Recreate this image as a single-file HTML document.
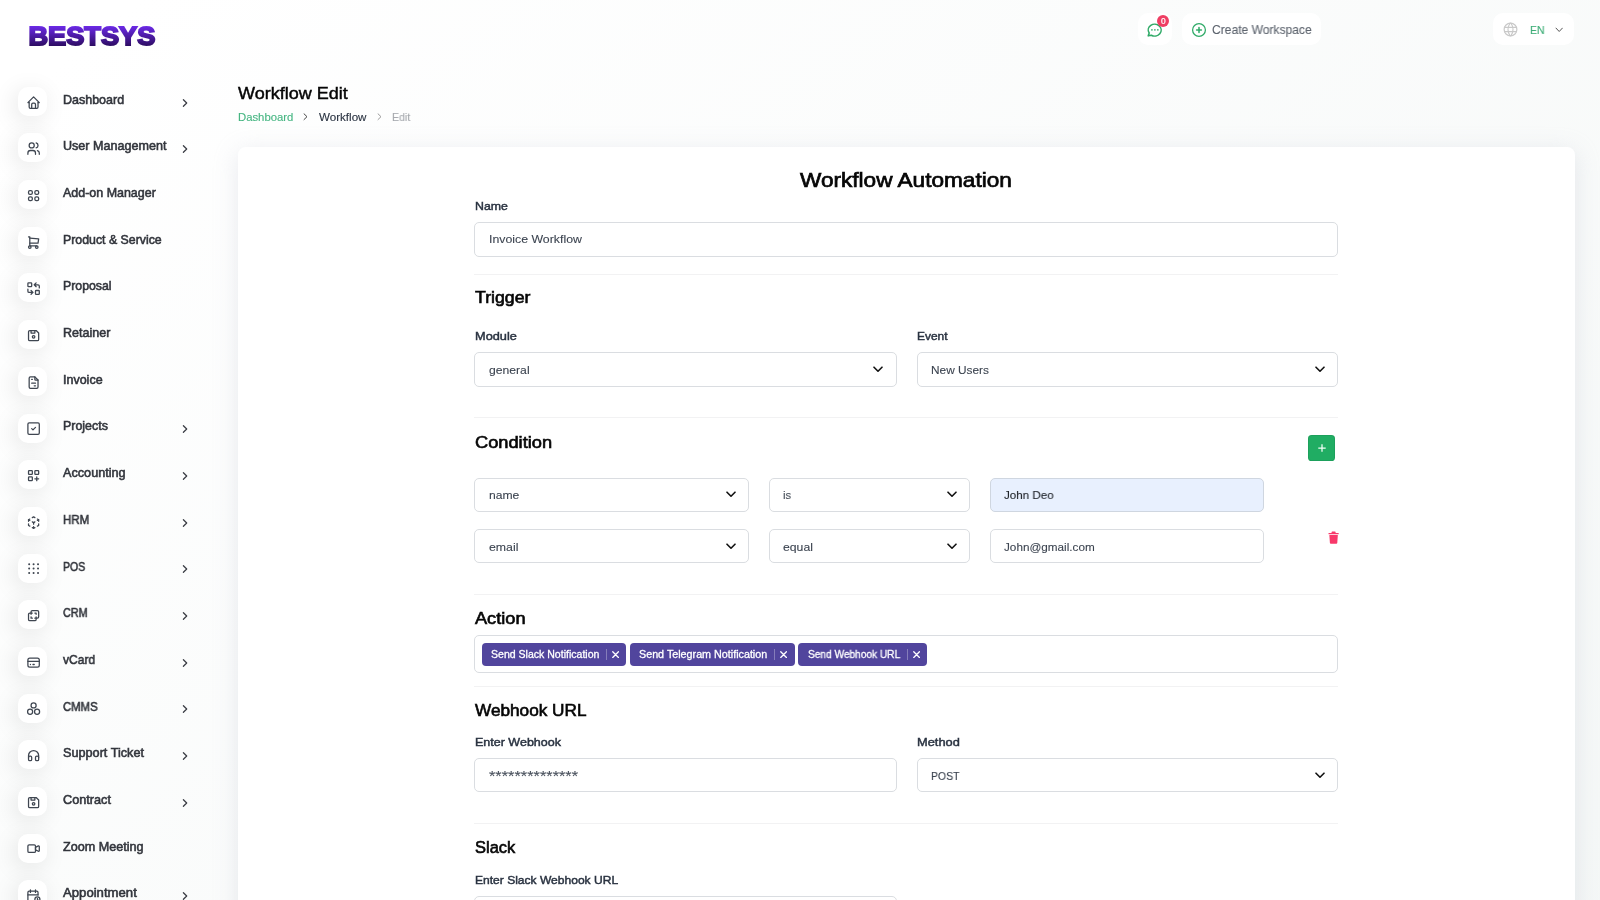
<!DOCTYPE html>
<html lang="en">
<head>
<meta charset="utf-8">
<title>Workflow Edit</title>
<style>
*{box-sizing:border-box;margin:0;padding:0}
html,body{width:1600px;height:900px;overflow:hidden}
body{font-family:"Liberation Sans",sans-serif;color:#293240;background:#fff;position:relative}
.bg{position:absolute;left:0;top:0;width:1600px;height:1800px;background:linear-gradient(141.55deg,rgba(240,244,243,0) 3.46%,#f0f4f3 99.86%),#ffffff}
.abs{position:absolute}
.t{position:absolute;white-space:nowrap;display:block;will-change:transform}
.sb{-webkit-text-stroke:0.45px currentColor}
/* sidebar */
.ib{position:absolute;left:18.3px;width:29px;height:29px;border-radius:10px;background:#fff;box-shadow:-3px 4px 23px rgba(0,0,0,0.1)}
.ib svg{position:absolute;left:7.3px;top:7.8px;width:15.2px;height:15.2px;stroke:#3f4651;fill:none;stroke-width:2;stroke-linecap:round;stroke-linejoin:round}
.mt{font-size:12.1px;line-height:14px;color:#32353c;-webkit-text-stroke:0.55px #32353c}
.ar{position:absolute;left:181px;width:8px;height:10px;stroke:#3a3d44;fill:none;stroke-width:1.25;stroke-linecap:round;stroke-linejoin:round}
/* header */
.hb{position:absolute;top:12.8px;height:32.7px;background:#fff;border-radius:10px}
/* main */
.card{position:absolute;left:238px;top:147px;width:1337px;height:800px;background:#fff;border-radius:8px;box-shadow:0 5px 24px rgba(182,186,203,0.3)}
.lbl{font-size:11.4px;line-height:14px;color:#293240;-webkit-text-stroke:0.45px #293240}
.h4{font-size:15.9px;line-height:20px;color:#060606;-webkit-text-stroke:0.6px #060606}
.box{position:absolute;border:1px solid #dadde1;border-radius:5px;background:#fff}
.it{font-size:11.7px;line-height:14px;color:#3c4450;-webkit-text-stroke:0.1px #3c4450}
.cv{position:absolute;width:10px;height:7px;stroke:#111;fill:none;stroke-width:1.6;stroke-linecap:round;stroke-linejoin:round}
.hr{position:absolute;left:474px;width:864px;height:1px;background:#f2f2f3}
.tag{position:absolute;top:642.5px;height:23.3px;border-radius:4px;background:#51459d}
.tt{font-size:10.5px;line-height:13px;color:#fff;-webkit-text-stroke:0.3px #fff}
.tag i{position:absolute;top:6px;width:1px;height:11.5px;background:rgba(255,255,255,0.3)}
.tag svg{position:absolute;top:8.1px;width:7.2px;height:7.2px;stroke:#fff;stroke-width:1.2;fill:none;stroke-linecap:round}
</style>
</head>
<body>
<div class="bg"></div>
<svg class="abs" style="left:26px;top:22px;will-change:transform" width="134" height="30" viewBox="0 0 134 30"><defs><linearGradient id="lg" gradientUnits="userSpaceOnUse" x1="0" y1="3" x2="0" y2="25"><stop offset="0" stop-color="#6f2bee"/><stop offset="1" stop-color="#2a0b5c"/></linearGradient></defs><text x="2.4" y="23.3" font-family="Liberation Sans, sans-serif" font-weight="bold" font-size="26.6" textLength="127" lengthAdjust="spacingAndGlyphs" fill="url(#lg)" stroke="url(#lg)" stroke-width="1.9" stroke-linejoin="miter">BESTSYS</text></svg>
<span class="ib" style="top:86.8px"><svg viewBox="0 0 24 24"><path d="M5 12l-2 0l9 -9l9 9l-2 0"/><path d="M5 12v7a2 2 0 0 0 2 2h10a2 2 0 0 0 2 -2v-7"/><path d="M9 21v-6a2 2 0 0 1 2 -2h2a2 2 0 0 1 2 2v6"/></svg></span>
<span class="t mt" id="t1" style="left:63.4px;top:92.56px;font-size:12.1px;line-height:14px;transform:scaleX(1.0326);transform-origin:0 0;">Dashboard</span>
<svg class="ar" style="top:97.5px" viewBox="0 0 8 10"><path d="M2.4 1.7l3.300 3.300l-3.300 3.300"/></svg>
<span class="ib" style="top:133.4px"><svg viewBox="0 0 24 24"><path d="M9 7m-4 0a4 4 0 1 0 8 0a4 4 0 1 0 -8 0"/><path d="M3 21v-2a4 4 0 0 1 4 -4h4a4 4 0 0 1 4 4v2"/><path d="M16 3.13a4 4 0 0 1 0 7.75"/><path d="M21 21v-2a4 4 0 0 0 -3 -3.85"/></svg></span>
<span class="t mt" id="t2" style="left:63.4px;top:139.26px;font-size:12.1px;line-height:14px;transform:scaleX(1.0394);transform-origin:0 0;">User Management</span>
<svg class="ar" style="top:144.2px" viewBox="0 0 8 10"><path d="M2.4 1.7l3.300 3.300l-3.300 3.300"/></svg>
<span class="ib" style="top:180.1px"><svg viewBox="0 0 24 24"><rect x="4" y="4" width="6" height="6" rx="2.2"/><rect x="14" y="4" width="6" height="6" rx="2.2"/><rect x="4" y="14" width="6" height="6" rx="2.2"/><rect x="14" y="14" width="6" height="6" rx="2.2"/></svg></span>
<span class="t mt" id="t3" style="left:63.4px;top:185.96px;font-size:12.1px;line-height:14px;transform:scaleX(1.0300);transform-origin:0 0;">Add-on Manager</span>
<span class="ib" style="top:226.8px"><svg viewBox="0 0 24 24"><path d="M6 19m-2 0a2 2 0 1 0 4 0a2 2 0 1 0 -4 0"/><path d="M17 19m-2 0a2 2 0 1 0 4 0a2 2 0 1 0 -4 0"/><path d="M17 17h-11v-14h-2"/><path d="M6 5l14 1l-1 7h-13"/></svg></span>
<span class="t mt" id="t4" style="left:63.4px;top:232.66px;font-size:12.1px;line-height:14px;transform:scaleX(1.0197);transform-origin:0 0;">Product &amp; Service</span>
<span class="ib" style="top:273.4px"><svg viewBox="0 0 24 24"><rect x="3" y="3" width="6" height="6" rx="1"/><rect x="15" y="15" width="6" height="6" rx="1"/><path d="M21 11v-3a2 2 0 0 0 -2 -2h-6l3 3m0 -6l-3 3"/><path d="M3 13v3a2 2 0 0 0 2 2h6l-3 -3m0 6l3 -3"/></svg></span>
<span class="t mt" id="t5" style="left:63.4px;top:279.36px;font-size:12.1px;line-height:14px;transform:scaleX(1.0181);transform-origin:0 0;">Proposal</span>
<span class="ib" style="top:320.1px"><svg viewBox="0 0 24 24"><path d="M6 4h10l4 4v10a2 2 0 0 1 -2 2h-12a2 2 0 0 1 -2 -2v-12a2 2 0 0 1 2 -2"/><path d="M12 14m-2 0a2 2 0 1 0 4 0a2 2 0 1 0 -4 0"/><path d="M14 4l0 4l-6 0l0 -4"/></svg></span>
<span class="t mt" id="t6" style="left:63.4px;top:326.06px;font-size:12.1px;line-height:14px;transform:scaleX(1.0368);transform-origin:0 0;">Retainer</span>
<span class="ib" style="top:366.8px"><svg viewBox="0 0 24 24"><path d="M14 3v4a1 1 0 0 0 1 1h4"/><path d="M17 21h-10a2 2 0 0 1 -2 -2v-14a2 2 0 0 1 2 -2h7l5 5v11a2 2 0 0 1 -2 2z"/><path d="M9 7l1 0"/><path d="M9 13l6 0"/><path d="M13 17l2 0"/></svg></span>
<span class="t mt" id="t7" style="left:63.4px;top:372.76px;font-size:12.1px;line-height:14px;transform:scaleX(1.0332);transform-origin:0 0;">Invoice</span>
<span class="ib" style="top:413.5px"><svg viewBox="0 0 24 24"><rect x="3" y="3" width="18" height="18" rx="2"/><path d="M9 12l2 2l4 -4"/></svg></span>
<span class="t mt" id="t8" style="left:63.4px;top:419.46px;font-size:12.1px;line-height:14px;transform:scaleX(1.0278);transform-origin:0 0;">Projects</span>
<svg class="ar" style="top:424.3px" viewBox="0 0 8 10"><path d="M2.4 1.7l3.300 3.300l-3.300 3.300"/></svg>
<span class="ib" style="top:460.1px"><svg viewBox="0 0 24 24"><rect x="4" y="4" width="6" height="6" rx="1"/><rect x="14" y="4" width="6" height="6" rx="1"/><rect x="4" y="14" width="6" height="6" rx="1"/><path d="M14 17h6m-3 -3v6"/></svg></span>
<span class="t mt" id="t9" style="left:63.4px;top:466.16px;font-size:12.1px;line-height:14px;transform:scaleX(1.0461);transform-origin:0 0;">Accounting</span>
<svg class="ar" style="top:470.9px" viewBox="0 0 8 10"><path d="M2.4 1.7l3.300 3.300l-3.300 3.300"/></svg>
<span class="ib" style="top:506.8px"><svg viewBox="0 0 24 24"><path d="M6 17.6l-2 -1.1v-2.5"/><path d="M4 10v-2.5l2 -1.1"/><path d="M10 4.1l2 -1.1l2 1.1"/><path d="M18 6.4l2 1.1v2.5"/><path d="M20 14v2.5l-2 1.12"/><path d="M14 19.9l-2 1.1l-2 -1.1"/><path d="M12 12l2 -1.1"/><path d="M18 8.6l2 -1.1"/><path d="M12 12l0 2.5"/><path d="M12 18.5l0 2.5"/><path d="M12 12l-2 -1.12"/><path d="M6 8.6l-2 -1.1"/></svg></span>
<span class="t mt" id="t10" style="left:63.4px;top:512.86px;font-size:12.1px;line-height:14px;transform:scaleX(0.9511);transform-origin:0 0;">HRM</span>
<svg class="ar" style="top:517.6px" viewBox="0 0 8 10"><path d="M2.4 1.7l3.300 3.300l-3.300 3.300"/></svg>
<span class="ib" style="top:553.5px"><svg viewBox="0 0 24 24"><g stroke-width="3.2"><path d="M5 5h.01M12 5h.01M19 5h.01M5 12h.01M12 12h.01M19 12h.01M5 19h.01M12 19h.01M19 19h.01"/></g></svg></span>
<span class="t mt" id="t11" style="left:63.4px;top:559.56px;font-size:12.1px;line-height:14px;transform:scaleX(0.8690);transform-origin:0 0;">POS</span>
<svg class="ar" style="top:564.3px" viewBox="0 0 8 10"><path d="M2.4 1.7l3.300 3.300l-3.300 3.300"/></svg>
<span class="ib" style="top:600.2px"><svg viewBox="0 0 24 24"><path d="M16 16v2a2 2 0 0 1 -2 2h-8a2 2 0 0 1 -2 -2v-8a2 2 0 0 1 2 -2h2v-2a2 2 0 0 1 2 -2h8a2 2 0 0 1 2 2v8a2 2 0 0 1 -2 2h-2"/><path d="M10 8l-2 0l0 2"/><path d="M8 14l0 2l2 0"/><path d="M14 8l2 0l0 2"/><path d="M16 14l0 2l-2 0"/></svg></span>
<span class="t mt" id="t12" style="left:63.4px;top:606.26px;font-size:12.1px;line-height:14px;transform:scaleX(0.8930);transform-origin:0 0;">CRM</span>
<svg class="ar" style="top:611.0px" viewBox="0 0 8 10"><path d="M2.4 1.7l3.300 3.300l-3.300 3.300"/></svg>
<span class="ib" style="top:646.8px"><svg viewBox="0 0 24 24"><rect x="3" y="5" width="18" height="14" rx="3"/><path d="M3 10l18 0"/><path d="M7 15l.01 0"/><path d="M11 15l2 0"/></svg></span>
<span class="t mt" id="t13" style="left:63.4px;top:652.96px;font-size:12.1px;line-height:14px;transform:scaleX(0.9949);transform-origin:0 0;">vCard</span>
<svg class="ar" style="top:657.6px" viewBox="0 0 8 10"><path d="M2.4 1.7l3.300 3.300l-3.300 3.300"/></svg>
<span class="ib" style="top:693.5px"><svg viewBox="0 0 24 24"><circle cx="12" cy="7" r="4"/><circle cx="6.5" cy="17" r="4"/><circle cx="17.5" cy="17" r="4"/></svg></span>
<span class="t mt" id="t14" style="left:63.4px;top:699.66px;font-size:12.1px;line-height:14px;transform:scaleX(0.9363);transform-origin:0 0;">CMMS</span>
<svg class="ar" style="top:704.3px" viewBox="0 0 8 10"><path d="M2.4 1.7l3.300 3.300l-3.300 3.300"/></svg>
<span class="ib" style="top:740.2px"><svg viewBox="0 0 24 24"><rect x="4" y="13" width="5" height="7" rx="2"/><rect x="15" y="13" width="5" height="7" rx="2"/><path d="M4 15v-3a8 8 0 0 1 16 0v3"/></svg></span>
<span class="t mt" id="t15" style="left:63.4px;top:746.36px;font-size:12.1px;line-height:14px;transform:scaleX(1.0477);transform-origin:0 0;">Support Ticket</span>
<svg class="ar" style="top:751.0px" viewBox="0 0 8 10"><path d="M2.4 1.7l3.300 3.300l-3.300 3.300"/></svg>
<span class="ib" style="top:786.8px"><svg viewBox="0 0 24 24"><path d="M6 4h10l4 4v10a2 2 0 0 1 -2 2h-12a2 2 0 0 1 -2 -2v-12a2 2 0 0 1 2 -2"/><path d="M12 14m-2 0a2 2 0 1 0 4 0a2 2 0 1 0 -4 0"/><path d="M14 4l0 4l-6 0l0 -4"/></svg></span>
<span class="t mt" id="t16" style="left:63.4px;top:793.06px;font-size:12.1px;line-height:14px;transform:scaleX(1.0499);transform-origin:0 0;">Contract</span>
<svg class="ar" style="top:797.6px" viewBox="0 0 8 10"><path d="M2.4 1.7l3.300 3.300l-3.300 3.300"/></svg>
<span class="ib" style="top:833.5px"><svg viewBox="0 0 24 24"><path d="M15 10l4.553 -2.276a1 1 0 0 1 1.447 .894v6.764a1 1 0 0 1 -1.447 .894l-4.553 -2.276v-4z"/><rect x="3" y="6" width="12" height="12" rx="2"/></svg></span>
<span class="t mt" id="t17" style="left:63.4px;top:839.76px;font-size:12.1px;line-height:14px;transform:scaleX(1.0425);transform-origin:0 0;">Zoom Meeting</span>
<span class="ib" style="top:880.2px"><svg viewBox="0 0 24 24"><path d="M11.795 21h-6.795a2 2 0 0 1 -2 -2v-12a2 2 0 0 1 2 -2h12a2 2 0 0 1 2 2v4"/><circle cx="18" cy="18" r="4"/><path d="M15 3v4"/><path d="M7 3v4"/><path d="M3 11h16"/><path d="M18 16.496v1.504l1 1"/></svg></span>
<span class="t mt" id="t18" style="left:63.4px;top:886.46px;font-size:12.1px;line-height:14px;transform:scaleX(1.0868);transform-origin:0 0;">Appointment</span>
<svg class="ar" style="top:891.0px" viewBox="0 0 8 10"><path d="M2.4 1.7l3.300 3.300l-3.300 3.300"/></svg>
<div class="hb" style="left:1138px;width:34px"></div>
<svg class="abs" style="left:1146.3px;top:21.1px" width="17.8" height="17.8" viewBox="0 0 24 24" fill="none" stroke="#2faa67" stroke-width="2.1" stroke-linecap="round" stroke-linejoin="round"><path d="M3 20l1.3 -3.9c-2.3 -3.4 -1.4 -7.8 2.1 -10.2c3.5 -2.4 8.400 -2.100 11.500 .800c3.100 2.800 3.400 7.200 .700 10.400c-2.700 3.200 -7.600 4.100 -11.400 2.100l-4.200 .800"/><path d="M8 12h.01M12 12h.01M16 12h.01" stroke-width="2.2"/></svg>
<span class="abs" style="left:1157px;top:14.6px;width:12.4px;height:12.4px;border-radius:6.2px;background:#ef3e63"></span>
<span class="t " id="t19" style="left:1160.8px;top:15.79px;font-size:8.4px;line-height:10px;color:#fff;-webkit-text-stroke:0.2px #fff;">0</span>
<div class="hb" style="left:1182px;width:138.6px"></div>
<svg class="abs" style="left:1190.6px;top:21.5px" width="16" height="16" viewBox="0 0 24 24" fill="none" stroke="#2faa67" stroke-width="1.9" stroke-linecap="round" stroke-linejoin="round"><circle cx="12" cy="12" r="9.6"/><path d="M8.4 12h7.2M12 8.4v7.2" stroke-width="2.3"/></svg>
<span class="t " id="t20" style="left:1211.5px;top:22.77px;font-size:12.2px;line-height:14px;transform:scaleX(0.9905);transform-origin:0 0;color:#5d646e;-webkit-text-stroke:0.1px #5d646e;">Create Workspace</span>
<div class="hb" style="left:1492.5px;width:81.5px"></div>
<svg class="abs" style="left:1502.7px;top:22.4px" width="15" height="15" viewBox="0 0 24 24" fill="none" stroke="#c9c9c9" stroke-width="1.9" stroke-linecap="round" stroke-linejoin="round"><circle cx="12" cy="12" r="10.2"/><path d="M2.600 8.600h18.800M2.600 15.400h18.800"/><path d="M11.300 2a17 17 0 0 0 0 20"/><path d="M12.700 2a17 17 0 0 1 0 20"/></svg>
<span class="t " id="t21" style="left:1529.9px;top:22.88px;font-size:11.6px;line-height:14px;transform:scaleX(0.9001);transform-origin:0 0;color:#3fae78;-webkit-text-stroke:0.15px #3fae78;">EN</span>
<svg class="abs" style="left:1555px;top:26.6px" width="8.4" height="6" viewBox="0 0 8.4 6" fill="none" stroke="#555" stroke-width="1" stroke-linecap="round" stroke-linejoin="round"><path d="M1 1.100l3.200 3.400l3.200 -3.400"/></svg>
<span class="t " id="t22" style="left:237.8px;top:82.61px;font-size:16.7px;line-height:22px;transform:scaleX(1.0791);transform-origin:0 0;color:#060606;-webkit-text-stroke:0.45px #060606;">Workflow Edit</span>
<span class="t " id="t23" style="left:237.8px;top:109.68px;font-size:11.3px;line-height:14px;transform:scaleX(1.0015);transform-origin:0 0;color:#45b581;-webkit-text-stroke:0.12px currentColor;">Dashboard</span>
<svg class="abs" style="left:303.4px;top:113.2px" width="5" height="7.400" viewBox="0 0 5 7.400" fill="none" stroke="#444" stroke-width="1" stroke-linecap="round" stroke-linejoin="round"><path d="M1 .800l3 2.900l-3 2.900"/></svg>
<span class="t " id="t24" style="left:318.5px;top:109.68px;font-size:11.3px;line-height:14px;transform:scaleX(1.0270);transform-origin:0 0;color:#293240;-webkit-text-stroke:0.12px currentColor;">Workflow</span>
<svg class="abs" style="left:376.600px;top:113.2px" width="5" height="7.400" viewBox="0 0 5 7.400" fill="none" stroke="#999" stroke-width="1" stroke-linecap="round" stroke-linejoin="round"><path d="M1 .800l3 2.900l-3 2.900"/></svg>
<span class="t " id="t25" style="left:391.9px;top:109.68px;font-size:11.3px;line-height:14px;transform:scaleX(0.9425);transform-origin:0 0;color:#a7aaaf;-webkit-text-stroke:0.12px currentColor;">Edit</span>
<div class="card"></div>
<span class="t " id="t26" style="left:800.2px;top:166.70px;font-size:20.2px;line-height:26px;transform:scaleX(1.1192);transform-origin:0 0;color:#060606;-webkit-text-stroke:0.7px #060606;">Workflow Automation</span>
<span class="t lbl" id="t27" style="left:474.7px;top:199.25px;font-size:11.4px;line-height:14px;transform:scaleX(1.0826);transform-origin:0 0;">Name</span>
<div class="box" style="left:474.0px;top:221.5px;width:864.0px;height:35.0px;"></div>
<span class="t it" id="t28" style="left:488.7px;top:231.05px;font-size:11.7px;line-height:15px;transform:scaleX(1.0542);transform-origin:0 0;">Invoice Workflow</span>
<div class="hr" style="top:273.5px"></div>
<span class="t h4" id="t29" style="left:474.8px;top:288.39px;font-size:15.9px;line-height:20px;transform:scaleX(1.1156);transform-origin:0 0;">Trigger</span>
<span class="t lbl" id="t30" style="left:474.8px;top:329.25px;font-size:11.4px;line-height:14px;transform:scaleX(1.1202);transform-origin:0 0;">Module</span>
<span class="t lbl" id="t31" style="left:916.9px;top:329.25px;font-size:11.4px;line-height:14px;transform:scaleX(1.0501);transform-origin:0 0;">Event</span>
<div class="box" style="left:474.0px;top:352.0px;width:422.5px;height:34.5px;"></div>
<svg class="cv" style="left:873.3px;top:365.9px" viewBox="0 0 10 7"><path d="M1 1.2l4 4l4 -4"/></svg>
<span class="t it" id="t32" style="left:488.5px;top:362.05px;font-size:11.7px;line-height:15px;transform:scaleX(1.0410);transform-origin:0 0;">general</span>
<div class="box" style="left:916.5px;top:352.0px;width:421.5px;height:34.5px;"></div>
<svg class="cv" style="left:1314.8px;top:365.9px" viewBox="0 0 10 7"><path d="M1 1.2l4 4l4 -4"/></svg>
<span class="t it" id="t33" style="left:930.6px;top:362.35px;font-size:11.7px;line-height:15px;transform:scaleX(1.0130);transform-origin:0 0;">New Users</span>
<div class="hr" style="top:417px"></div>
<span class="t h4" id="t34" style="left:475.0px;top:432.69px;font-size:15.9px;line-height:20px;transform:scaleX(1.1483);transform-origin:0 0;">Condition</span>
<div class="abs" style="left:1308px;top:435px;width:27px;height:25.8px;border-radius:3.600px;background:#20ad63;box-shadow:inset 0 0 0 1px rgba(0,0,0,0.07)"><svg class="abs" style="left:9.600px;top:8.900px" width="8" height="8" viewBox="0 0 8 8" stroke="#f2fff8" stroke-width="1.25" stroke-linecap="butt"><path d="M4 0.3v7.4M0.3 4h7.4"/></svg></div>
<div class="box" style="left:474.0px;top:477.5px;width:275.0px;height:34.1px;"></div>
<svg class="cv" style="left:725.8px;top:491.3px" viewBox="0 0 10 7"><path d="M1 1.2l4 4l4 -4"/></svg>
<span class="t it" id="t35" style="left:488.8px;top:487.40px;font-size:11.7px;line-height:15px;transform:scaleX(1.0376);transform-origin:0 0;">name</span>
<div class="box" style="left:769.0px;top:477.5px;width:201.0px;height:34.1px;"></div>
<svg class="cv" style="left:946.8px;top:491.3px" viewBox="0 0 10 7"><path d="M1 1.2l4 4l4 -4"/></svg>
<span class="t it" id="t36" style="left:783.4px;top:487.40px;font-size:11.7px;line-height:15px;transform:scaleX(0.9582);transform-origin:0 0;">is</span>
<div class="box" style="left:990.0px;top:477.5px;width:274.0px;height:34.1px;background:#e8f0fe;border-color:#cfd6e0;"></div>
<span class="t it" id="t37" style="left:1003.8px;top:487.40px;font-size:11.7px;line-height:15px;transform:scaleX(0.9931);transform-origin:0 0;color:#15181d;">John Deo</span>
<div class="box" style="left:474.0px;top:529.3px;width:275.0px;height:33.8px;"></div>
<svg class="cv" style="left:725.8px;top:542.9px" viewBox="0 0 10 7"><path d="M1 1.2l4 4l4 -4"/></svg>
<span class="t it" id="t38" style="left:488.8px;top:539.05px;font-size:11.7px;line-height:15px;transform:scaleX(1.0541);transform-origin:0 0;">email</span>
<div class="box" style="left:769.0px;top:529.3px;width:201.0px;height:33.8px;"></div>
<svg class="cv" style="left:946.8px;top:542.9px" viewBox="0 0 10 7"><path d="M1 1.2l4 4l4 -4"/></svg>
<span class="t it" id="t39" style="left:783.4px;top:539.05px;font-size:11.7px;line-height:15px;transform:scaleX(1.0451);transform-origin:0 0;">equal</span>
<div class="box" style="left:990.0px;top:529.3px;width:274.0px;height:33.8px;"></div>
<span class="t it" id="t40" style="left:1003.8px;top:539.05px;font-size:11.7px;line-height:15px;transform:scaleX(1.0026);transform-origin:0 0;">John@gmail.com</span>
<svg class="abs" style="left:1327.5px;top:531.3px" width="11.2" height="12.9" viewBox="0 0 12 14" fill="#f8386a"><path d="M0.500 2.100h3.100l0.600-1.500h3.600l0.600 1.500h3.100v1.500h-11z"/><path d="M1.400 4.400h9.200l-0.600 8.500a1 1 0 0 1 -1 .9h-6a1 1 0 0 1 -1 -.9z"/></svg>
<div class="hr" style="top:594px"></div>
<span class="t h4" id="t41" style="left:474.6px;top:609.19px;font-size:15.9px;line-height:20px;transform:scaleX(1.1433);transform-origin:0 0;">Action</span>
<div class="box" style="left:474.0px;top:635.0px;width:864.0px;height:37.7px;"></div>
<div class="tag" style="left:481.6px;width:144.9px"><i style="left:124.3px"></i><svg style="left:130.6px" viewBox="0 0 6.600 6.600"><path d="M.700 .700l5.200 5.200M5.900 .700l-5.200 5.200"/></svg></div>
<span class="t tt" id="t42" style="left:490.5px;top:647.66px;font-size:10.5px;line-height:13px;transform:scaleX(1.0038);transform-origin:0 0;">Send Slack Notification</span>
<div class="tag" style="left:630.1px;width:164.5px"><i style="left:143.9px"></i><svg style="left:150.2px" viewBox="0 0 6.600 6.600"><path d="M.700 .700l5.200 5.200M5.900 .700l-5.200 5.200"/></svg></div>
<span class="t tt" id="t43" style="left:639.2px;top:647.66px;font-size:10.5px;line-height:13px;transform:scaleX(1.0232);transform-origin:0 0;">Send Telegram Notification</span>
<div class="tag" style="left:798.3px;width:129.2px"><i style="left:108.6px"></i><svg style="left:114.9px" viewBox="0 0 6.600 6.600"><path d="M.700 .700l5.200 5.200M5.900 .700l-5.200 5.200"/></svg></div>
<span class="t tt" id="t44" style="left:807.5px;top:647.66px;font-size:10.5px;line-height:13px;transform:scaleX(0.9651);transform-origin:0 0;">Send Webhook URL</span>
<div class="hr" style="top:686px"></div>
<span class="t h4" id="t45" style="left:475.0px;top:700.79px;font-size:15.9px;line-height:20px;transform:scaleX(1.0819);transform-origin:0 0;">Webhook URL</span>
<span class="t lbl" id="t46" style="left:475.0px;top:735.05px;font-size:11.4px;line-height:14px;transform:scaleX(1.0982);transform-origin:0 0;">Enter Webhook</span>
<span class="t lbl" id="t47" style="left:916.9px;top:735.05px;font-size:11.4px;line-height:14px;transform:scaleX(1.1276);transform-origin:0 0;">Method</span>
<div class="box" style="left:474.0px;top:757.5px;width:422.5px;height:34.8px;"></div>
<span class="t it" id="t48" style="left:489.0px;top:767.23px;font-size:15.5px;line-height:18px;transform:scaleX(1.0550);transform-origin:0 0;color:#49515d;">**************</span>
<div class="box" style="left:916.5px;top:757.5px;width:421.5px;height:34.8px;"></div>
<svg class="cv" style="left:1314.8px;top:771.6px" viewBox="0 0 10 7"><path d="M1 1.2l4 4l4 -4"/></svg>
<span class="t it" id="t49" style="left:930.6px;top:768.15px;font-size:11.7px;line-height:15px;transform:scaleX(0.8923);transform-origin:0 0;">POST</span>
<div class="hr" style="top:823px"></div>
<span class="t h4" id="t50" style="left:475.0px;top:838.29px;font-size:15.9px;line-height:20px;transform:scaleX(1.0358);transform-origin:0 0;">Slack</span>
<span class="t lbl" id="t51" style="left:475.0px;top:872.55px;font-size:11.4px;line-height:14px;transform:scaleX(1.0578);transform-origin:0 0;">Enter Slack Webhook URL</span>
<div class="box" style="left:474.0px;top:895.6px;width:422.5px;height:34.4px;"></div>
</body>
</html>
